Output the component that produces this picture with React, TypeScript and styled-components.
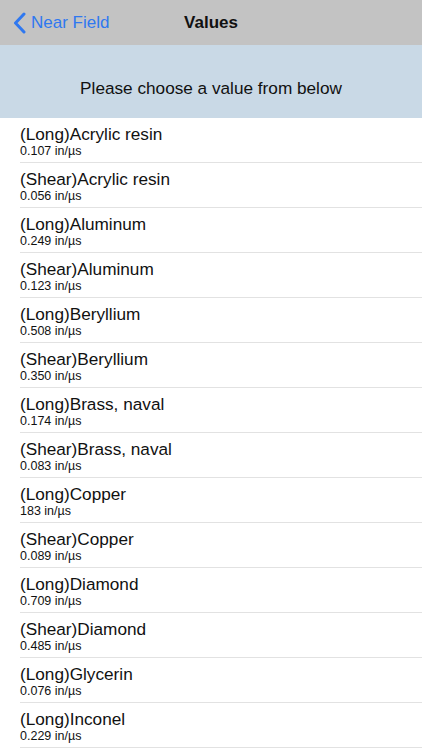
import React from "react";
import styled, { createGlobalStyle } from "styled-components";

const GlobalStyle = createGlobalStyle`
  body {
    margin: 0;
    background: #ffffff;
    font-family: "Liberation Sans", Arial, sans-serif;
    -webkit-font-smoothing: antialiased;
  }
`;

const Screen = styled.div`
  width: 422px;
  height: 750px;
  overflow: hidden;
  background: #ffffff;
`;

const NavBar = styled.div`
  height: 45px;
  background: #c3c3c3;
  display: grid;
  grid-template-columns: 1fr auto 1fr;
  align-items: center;
`;

const BackButton = styled.div`
  display: flex;
  align-items: center;
  gap: 5px;
  padding-left: 13px;
  color: #2f78f0;
  font-size: 17px;
`;

const NavTitle = styled.div`
  font-size: 17px;
  font-weight: 700;
  color: #111;
`;

const Prompt = styled.div`
  height: 73px;
  background: #c9d9e6;
  display: flex;
  align-items: center;
  justify-content: center;
  font-size: 17.2px;
  color: #111;
  padding-top: 13px;
  box-sizing: border-box;
`;

const List = styled.div`
  display: flex;
  flex-direction: column;
`;

const Row = styled.div`
  height: 45px;
  margin-left: 20px;
  border-bottom: 1px solid #e2e2e2;
  box-sizing: border-box;
  display: flex;
  flex-direction: column;
  justify-content: center;
  gap: 0px;
  padding-top: 2px;
`;

const Name = styled.div`
  font-size: 17.2px;
  line-height: 20px;
  color: #111;
`;

const Speed = styled.div`
  font-size: 12.5px;
  line-height: 14px;
  color: #111;
`;

const values: [string, string][] = [
  ["(Long)Acrylic resin", "0.107 in/µs"],
  ["(Shear)Acrylic resin", "0.056 in/µs"],
  ["(Long)Aluminum", "0.249 in/µs"],
  ["(Shear)Aluminum", "0.123 in/µs"],
  ["(Long)Beryllium", "0.508 in/µs"],
  ["(Shear)Beryllium", "0.350 in/µs"],
  ["(Long)Brass, naval", "0.174 in/µs"],
  ["(Shear)Brass, naval", "0.083 in/µs"],
  ["(Long)Copper", "183 in/µs"],
  ["(Shear)Copper", "0.089 in/µs"],
  ["(Long)Diamond", "0.709 in/µs"],
  ["(Shear)Diamond", "0.485 in/µs"],
  ["(Long)Glycerin", "0.076 in/µs"],
  ["(Long)Inconel", "0.229 in/µs"],
];

const App: React.FC = () => {
  return (
    <Screen>
      <GlobalStyle />
      <NavBar>
        <BackButton>
          <svg width="13" height="22" viewBox="0 0 13 22">
            <path
              d="M11 2 L2.5 11 L11 20"
              fill="none"
              stroke="#2f78f0"
              strokeWidth="3"
              strokeLinecap="round"
              strokeLinejoin="round"
            />
          </svg>
          Near Field
        </BackButton>
        <NavTitle>Values</NavTitle>
        <div />
      </NavBar>
      <Prompt>Please choose a value from below</Prompt>
      <List>
        {values.map(([name, speed]) => (
          <Row key={name}>
            <Name>{name}</Name>
            <Speed>{speed}</Speed>
          </Row>
        ))}
      </List>
    </Screen>
  );
};

export default App;
